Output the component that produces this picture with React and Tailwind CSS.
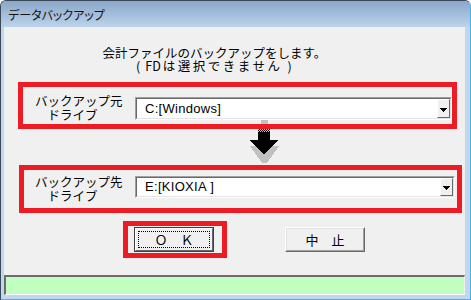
import React from "react";

const jp = "font-['Noto_Sans_CJK_JP',sans-serif]";

function DropArrow() {
  return (
    <svg width="7" height="4" viewBox="0 0 7 4" shapeRendering="crispEdges">
      <polygon points="0,0 7,0 3.5,4" fill="#000" />
    </svg>
  );
}

function Combo({ text, w, h }) {
  return (
    <div
      className="border-t border-l border-[#a0a0a0] border-b-white border-r-white border-b border-r"
      style={{ width: w, height: h }}
    >
      <div className="w-full h-full border-t border-l border-[#696969] border-b border-r border-b-[#e3e3e3] border-r-[#e3e3e3] bg-white flex items-stretch">
        <div className="flex-1 pl-[8px] flex items-center text-[13px] leading-[14px] text-black font-['Liberation_Sans','Noto_Sans_CJK_JP',sans-serif] tracking-[0.3px]">
          {text}
        </div>
        <div className="w-[13px] bg-[#f0f0f0] border-t border-l border-white border-b border-r border-b-[#696969] border-r-[#696969] flex items-center justify-center pt-[2px]">
          <DropArrow />
        </div>
      </div>
    </div>
  );
}

function DownArrow() {
  return (
    <svg width="32" height="44" viewBox="0 0 32 44" shapeRendering="crispEdges">
      <defs>
        <pattern id="dith" width="2" height="2" patternUnits="userSpaceOnUse">
          <rect x="0" y="0" width="2" height="2" fill="#c0c0c0" />
          <rect x="0" y="0" width="1" height="1" fill="#000" />
          <rect x="1" y="1" width="1" height="1" fill="#000" />
        </pattern>
      </defs>
      <rect x="13" y="0" width="7" height="9" fill="#c0c0c0" />
      <polygon points="2,26 31,26 19,43 14,43" fill="#c0c0c0" />
      <rect x="10" y="9" width="12" height="3" fill="url(#dith)" />
      <rect x="10" y="12" width="12" height="8" fill="#000" />
      <polygon points="1,20 31,20 16.5,34 15.5,34" fill="#000" />
    </svg>
  );
}

function Button({ children, def }) {
  if (def) {
    return (
      <div className="w-[80px] h-[25px] border border-[#404040] bg-[#f0f0f0]">
        <div className="w-full h-full border-t border-l border-white border-b border-r border-b-[#696969] border-r-[#696969] p-[2px]">
          <div className="w-full h-full border border-dotted border-black flex items-center justify-center text-[13px] leading-[13px] text-black">
            {children}
          </div>
        </div>
      </div>
    );
  }
  return (
    <div className="w-[80px] h-[25px] border-t border-l border-white border-b border-r border-b-[#696969] border-r-[#696969] bg-[#f0f0f0]">
      <div className="w-full h-full border-b border-r border-b-[#a0a0a0] border-r-[#a0a0a0] border-t border-l border-t-[#e3e3e3] border-l-[#e3e3e3] flex items-center justify-center text-[13px] leading-[13px] text-black">
        {children}
      </div>
    </div>
  );
}

export default function App() {
  return (
    <div className={`w-[471px] h-[300px] bg-white ${jp}`}>
      <div className="w-[471px] h-[300px] flex flex-col rounded-t-[6px] border border-[#3a4858] border-r-[#3cb8e6] border-b-[#3cb8e6] bg-[#c2d7ed] overflow-hidden">
        <div className="h-[26px] shrink-0 bg-linear-to-b from-[#8aa7c8] to-[#bcd3eb] pl-[7px] pt-[7px] text-[12px] leading-[14px] text-[#141414] [font-feature-settings:'palt']">
          データバックアップ
        </div>
        <div className="h-[268px] shrink-0 ml-[3px] w-[461px] bg-[#f0f0f0] flex flex-col items-start">
          <div className="mt-[19px] w-[421px] text-[12.5px] leading-[13px] text-black">
            <div className="text-center">会計ファイルのバックアップをします。</div>
            <div className="flex items-baseline whitespace-pre">
              <span className="ml-[132px]">(</span>
              <span className="ml-[5px]">FD</span>
              <span className="ml-[2px] tracking-[2.5px]">は選択できません</span>
              <span className="ml-[5px]">)</span>
            </div>
          </div>

          <div className="mt-[10px] ml-[14px] w-[439px] h-[47px] border-[5px] border-[#ed1c24] relative z-10 flex items-start">
            <div className="ml-[12px] mt-[7px] w-[100px] text-[12.5px] leading-[14px] text-black whitespace-pre">
              <div>バックアップ元</div>
              <div>{"　ドライブ"}</div>
            </div>
            <div className="mt-[10px]">
              <Combo text="C:[Windows]" w={317} h={23} />
            </div>
          </div>

          <div className="-mt-[9px] ml-[244px] h-[44px]">
            <DownArrow />
          </div>

          <div className="mt-[1px] ml-[15px] w-[443px] h-[48px] border-[5px] border-[#ed1c24] flex items-start">
            <div className="ml-[11px] mt-[5px] w-[100px] text-[12.5px] leading-[14px] text-black whitespace-pre">
              <div>バックアップ先</div>
              <div>{"　ドライブ"}</div>
            </div>
            <div className="mt-[6px]">
              <Combo text="E:[KIOXIA ]" w={320} h={22} />
            </div>
          </div>

          <div className="mt-[8px] flex items-center">
            <div className="ml-[119px] w-[104px] h-[37px] border-[5px] border-[#ed1c24] pl-[6px] pt-[1px]">
              <Button def>Ｏ　Ｋ</Button>
            </div>
            <div className="ml-[58px]">
              <Button>中　止</Button>
            </div>
          </div>

          <div className="mt-[17px] w-[461px] h-[20px] border-t-2 border-l-2 border-[#6d6d6d] border-b border-r border-b-white border-r-[#f0f0f0] bg-[#c0ffc0]" />
        </div>
        <div className="flex-1 bg-[#c2d7ed]" />
      </div>
    </div>
  );
}
